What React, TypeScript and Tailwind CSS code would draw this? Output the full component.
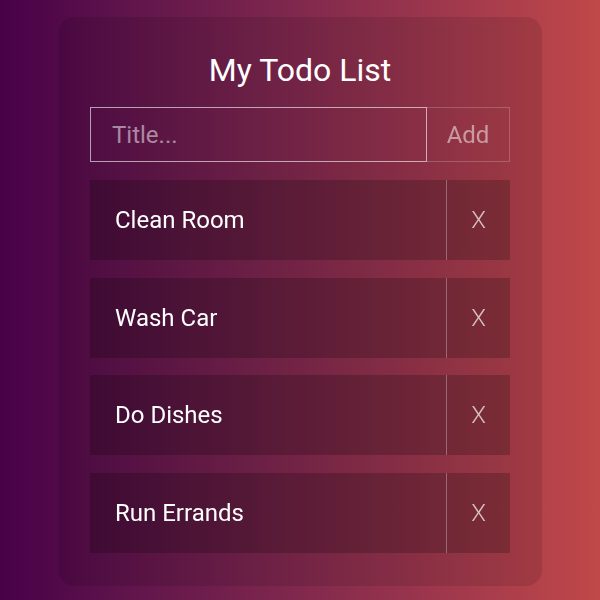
import { useState } from "react";

export default function App() {
  const [title, setTitle] = useState("");
  const [todos, setTodos] = useState<string[]>([
    "Clean Room",
    "Wash Car",
    "Do Dishes",
    "Run Errands",
  ]);

  const handleAdd = () => {
    if (!title.trim()) return;
    setTodos([...todos, title.trim()]);
    setTitle("");
  };

  const handleDelete = (i: number) => {
    setTodos(todos.filter((_, idx) => idx !== i));
  };

  return (
    <div
      className="min-h-[600px] w-full bg-gradient-to-r from-[#480048] to-[#c04848] pt-[17px] text-white"
      style={{ fontFamily: "Roboto, 'Liberation Sans', sans-serif" }}
    >
      <div className="mx-auto w-[484px] rounded-2xl bg-black/10 px-8 pt-[29px] pb-[33px]">
        <h1 className="text-center text-[32px] leading-[48px] font-normal">My Todo List</h1>

        {/* Add Form */}
        <div className="mt-[13px] flex h-[55px]">
          <input
            autoFocus
            value={title}
            placeholder="Title..."
            onChange={(e) => setTitle(e.target.value)}
            className="h-full flex-1 border border-white/60 bg-transparent pl-[21px] text-[24px] text-white placeholder:text-white/50 outline-none"
          />
          <button
            onClick={handleAdd}
            className="h-full w-[83px] border border-l-0 border-white/20 text-[24px] text-white/50"
          >
            Add
          </button>
        </div>

        {/* Todo List */}
        <div className="mt-[18px] flex flex-col gap-[17.5px]">
          {todos.map((t, i) => (
            <div key={i} className="flex h-[80px] bg-black/20">
              <div className="flex flex-1 items-center pl-[25px] text-[24px]">{t}</div>
              <button
                onClick={() => handleDelete(i)}
                className="flex w-[64px] items-center justify-center border-l border-white/30 text-[24px] font-light text-white/70"
              >
                X
              </button>
            </div>
          ))}
        </div>
      </div>
    </div>
  );
}
